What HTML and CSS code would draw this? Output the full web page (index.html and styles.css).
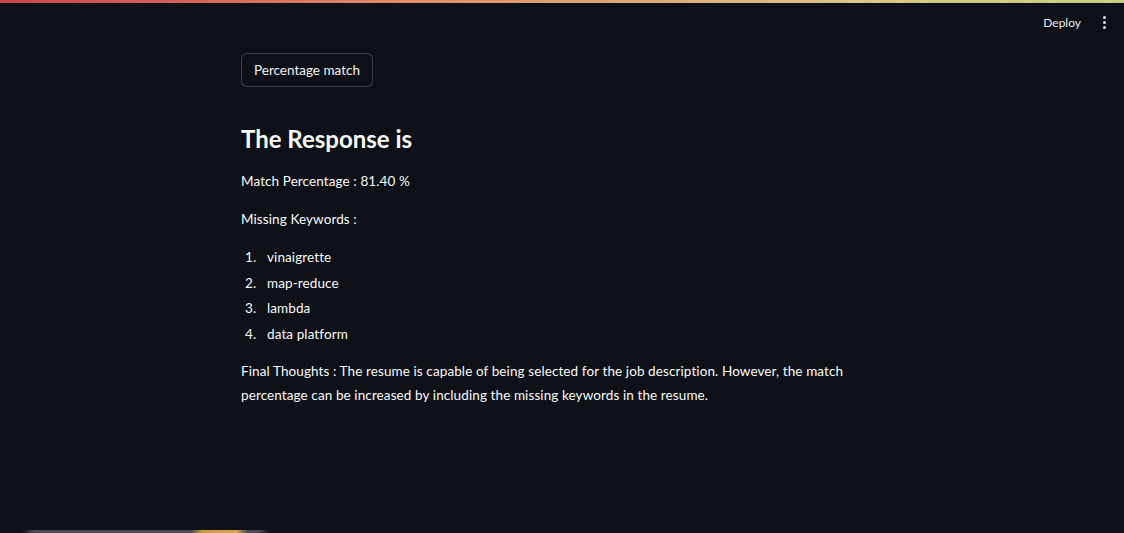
FILE: index.html
```html
<!DOCTYPE html>
<html>
<head>
<meta charset="utf-8">
<link rel="stylesheet" href="styles.css">
</head>
<body>
<div class="decoration"></div>
<header class="toolbar">
  <span class="deploy">Deploy</span>
  <span class="menu"><i></i><i></i><i></i></span>
</header>
<main class="main">
  <button class="btn">Percentage match</button>
  <h2 class="title">The Response is</h2>
  <p class="line">Match Percentage : 81.40 %</p>
  <p class="line">Missing Keywords :</p>
  <ol class="list">
    <li>vinaigrette</li>
    <li>map-reduce</li>
    <li>lambda</li>
    <li>data platform</li>
  </ol>
  <p class="final">Final Thoughts : The resume is capable of being selected for the job description. However, the match percentage can be increased by including the missing keywords in the resume.</p>
</main>
<div class="bottom"></div>
</body>
</html>
```
FILE: styles.css
```css
html, body {
  margin: 0;
  padding: 0;
  height: 100%;
  background: #0e1117;
  color: #fafafa;
  font-family: "Lato", "Liberation Sans", sans-serif;
  overflow: hidden;
}
body {
  display: flex;
  flex-direction: column;
}
.decoration {
  height: 3px;
  background: linear-gradient(90deg, #c8444f, #e08a6c 35%, #dcc487 75%, #c6cf86);
  flex: none;
}
.toolbar {
  display: flex;
  justify-content: flex-end;
  align-items: center;
  height: 38px;
  padding-right: 16px;
  gap: 20px;
}
.deploy {
  font-size: 12px;
  color: #e8e8e8;
}
.menu {
  display: flex;
  flex-direction: column;
  gap: 2px;
  padding: 0 2px;
}
.menu i {
  width: 3px;
  height: 3px;
  border-radius: 50%;
  background: #e0e0e0;
}
.main {
  flex: 1;
  padding: 12px 0 0 241px;
}
.btn {
  font-family: inherit;
  font-size: 13.5px;
  color: #f0f0f0;
  background: #0e1117;
  border: 1px solid rgba(250, 250, 250, 0.2);
  border-radius: 6px;
  height: 34px;
  padding: 0 12px;
  display: block;
}
.title {
  margin: 37px 0 0;
  font-size: 24px;
  font-weight: 700;
  line-height: 30px;
  color: #fafafa;
}
.line {
  margin: 15px 0 0;
  font-size: 13.5px;
  letter-spacing: 0.1px;
  line-height: 24px;
}
.line + .line {
  margin-top: 14px;
}
.list {
  margin: 14px 0 0;
  padding: 0;
  list-style: none;
  counter-reset: item;
  font-size: 13.5px;
  letter-spacing: 0.1px;
}
.list li {
  line-height: 25.7px;
  counter-increment: item;
  display: flex;
}
.list li::before {
  content: counter(item) ".";
  width: 22px;
  padding-left: 4px;
  flex: none;
}
.final {
  margin: 11px 0 0;
  font-size: 13.5px;
  letter-spacing: 0.1px;
  line-height: 24px;
  width: 616px;
}
.bottom {
  height: 3px;
  background: linear-gradient(90deg, #0e1117 2%, #4a4d55 3%, #4a4d55 17%, #c89a3a 18%, #d6a847 21%, #4a4d55 22%, #4a4d55 23%, #0e1117 24%);
  flex: none;
}
```
